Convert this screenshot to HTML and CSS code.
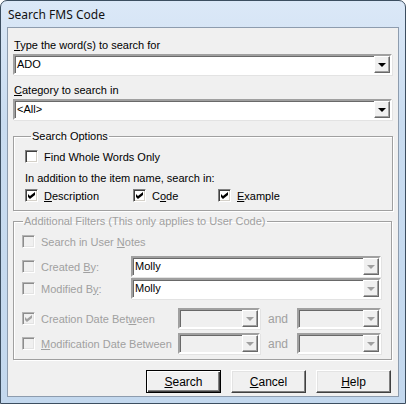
FILE: index.html
```html
<!DOCTYPE html>
<html lang="en">
<head>
  <meta charset="UTF-8">
  <title>Search FMS Code</title>
  <link rel="stylesheet" href="styles.css">
</head>
<body>
  <div class="window">
    <div class="titlebar">Search FMS Code</div>
    <div class="client">
      <div class="label first"><u>T</u>ype the word(s) to search for</div>
      <div class="combo wide">
        <span class="value">ADO</span>
        <span class="drop"><i></i></span>
      </div>
      <div class="label"><u>C</u>ategory to search in</div>
      <div class="combo wide">
        <span class="value">&lt;All&gt;</span>
        <span class="drop"><i></i></span>
      </div>

      <fieldset class="group options">
        <legend>Search Options</legend>
        <label class="check-row whole">
          <span class="check"></span><span>Find Whole Words Only</span>
        </label>
        <div class="note">In addition to the item name, search in:</div>
        <div class="in-row">
          <label class="check-row desc"><span class="check on"></span><span><u>D</u>escription</span></label>
          <label class="check-row code"><span class="check on"></span><span>C<u>o</u>de</span></label>
          <label class="check-row example"><span class="check on"></span><span><u>E</u>xample</span></label>
        </div>
      </fieldset>

      <fieldset class="group filters">
        <legend>Additional Filters (This only applies to User Code)</legend>
        <label class="check-row notes"><span class="check"></span><span>Search in User <u>N</u>otes</span></label>
        <div class="filter-row user">
          <label class="check-row"><span class="check"></span><span>Created <u>B</u>y:</span></label>
          <div class="combo">
            <span class="value">Molly</span>
            <span class="drop"><i></i></span>
          </div>
        </div>
        <div class="filter-row user">
          <label class="check-row"><span class="check"></span><span>Modified B<u>y</u>:</span></label>
          <div class="combo">
            <span class="value">Molly</span>
            <span class="drop"><i></i></span>
          </div>
        </div>
        <div class="filter-row date">
          <label class="check-row"><span class="check on"></span><span>Creation Date Bet<u>w</u>een</span></label>
          <div class="combo grey"><span class="value"></span><span class="drop"><i></i></span></div>
          <span class="and">and</span>
          <div class="combo grey"><span class="value"></span><span class="drop"><i></i></span></div>
        </div>
        <div class="filter-row date">
          <label class="check-row"><span class="check"></span><span><u>M</u>odification Date Between</span></label>
          <div class="combo grey"><span class="value"></span><span class="drop"><i></i></span></div>
          <span class="and">and</span>
          <div class="combo grey"><span class="value"></span><span class="drop"><i></i></span></div>
        </div>
      </fieldset>

      <div class="buttons">
        <button class="default"><u>S</u>earch</button>
        <button><u>C</u>ancel</button>
        <button><u>H</u>elp</button>
      </div>
    </div>
  </div>
</body>
</html>
```

FILE: styles.css
```css
* {
  box-sizing: border-box;
}

body {
  margin: 0;
  font-family: "Liberation Sans", Arial, sans-serif;
  font-size: 11px;
  color: #000;
}

.window {
  width: 406px;
  height: 404px;
  border: 1px solid #3c4e60;
  border-radius: 7px 7px 0 0;
  background: linear-gradient(#dbe8f7, #c9dcf0 30%, #c3d8ee);
  padding: 0 6px 6px 6px;
}

.titlebar {
  height: 26px;
  line-height: 27px;
  padding-left: 1px;
  font-size: 12px;
  font-family: "Noto Sans", "Liberation Sans", sans-serif;
  color: #111;
}

.client {
  height: 370px;
  border: 1px solid #8d9cae;
  background: #f0f0f0;
  padding: 0 5px 0 5px;
}

.label {
  height: 13px;
  line-height: 13px;
  margin-top: 9px;
  padding-left: 1px;
}
.label.first {
  margin-top: 11px;
}

/* combo boxes */
.combo {
  display: flex;
  height: 21px;
  background: #fff;
  border: 2px solid;
  border-color: #a0a0a0 #fff #fff #a0a0a0;
  box-shadow: inset 1px 1px 0 #696969, 1px 1px 0 #e3e3e3;
}
.combo.wide {
  margin: 2px 1px 0 0;
}
.combo .value {
  flex: 1;
  line-height: 16px;
  padding-left: 2px;
  white-space: nowrap;
  overflow: hidden;
}
.combo .drop {
  width: 16px;
  height: 17px;
  background: #f0f0f0;
  border: 1px solid;
  border-color: #fff #696969 #696969 #fff;
  box-shadow: inset -1px -1px 0 #a0a0a0;
  display: flex;
  align-items: center;
  justify-content: center;
}
.combo .drop i {
  width: 0;
  height: 0;
  border-left: 4px solid transparent;
  border-right: 4px solid transparent;
  border-top: 4px solid #000;
  margin-top: 1px;
}
.combo.grey {
  background: #f0f0f0;
}

/* group boxes */
.group {
  margin: 10px 0 0 0;
  border: 1px solid #a0a0a0;
  box-shadow: inset 1px 1px 0 #fff, 1px 1px 0 #fff;
  padding: 0 10px 0 11px;
  min-width: 0;
}
.group legend {
  padding: 0 1px;
  margin-left: 6px;
  line-height: 13px;
}

.check-row {
  display: flex;
  align-items: center;
  white-space: nowrap;
}
.check {
  width: 13px;
  height: 13px;
  flex: none;
  margin-right: 6px;
  background: #fff;
  border: 1px solid;
  border-color: #808080 #fff #fff #808080;
  box-shadow: inset 1px 1px 0 #404040, inset -1px -1px 0 #d4d0c8;
  position: relative;
}
.check.on::after {
  content: "";
  position: absolute;
  left: 2px;
  top: 2px;
  width: 7px;
  height: 7px;
  background: #000;
  clip-path: polygon(0 28%, 28% 57%, 100% 0, 100% 43%, 28% 100%, 0 71%);
}

.options .whole {
  margin-top: 7px;
  height: 13px;
}
.options .note {
  margin-top: 9px;
  height: 13px;
  line-height: 13px;
}
.in-row {
  display: flex;
  margin-top: 4px;
  height: 13px;
  margin-bottom: 8px;
}
.in-row .desc {
  width: 108px;
}
.in-row .code {
  width: 85px;
}

/* disabled filters */
.filters {
  margin-top: 4px;
  margin-right: 1px;
  padding: 0 10px 0 8px;
  color: #a0a0a0;
}
.filters legend {
  margin-left: 1px;
}
.filters .check {
  background: #f0f0f0;
  border-color: #b4b4b4 #fff #fff #b4b4b4;
  box-shadow: inset 1px 1px 0 #8c8c8c, inset -1px -1px 0 #e3e3e3;
}
.filters .check.on::after {
  background: #a0a0a0;
}
.filters .combo .drop i {
  border-top-color: #a0a0a0;
}
.filters .combo .value {
  color: #000;
}
.filters .notes {
  height: 13px;
  margin-top: 7px;
}
.filter-row {
  display: flex;
  align-items: center;
  height: 21px;
  margin-top: 1px;
}
.filters .notes + .filter-row {
  margin-top: 8px;
}
.filter-row.user .check-row {
  width: 109px;
}
.filter-row.user .combo {
  flex: 1;
}
.filter-row.date {
  margin-top: 9px;
}
.filter-row.date + .filter-row.date {
  margin-top: 4px;
  margin-bottom: 5px;
}
.filter-row.date .check-row {
  width: 156px;
}
.filter-row.date .combo {
  width: 82px;
}
.filter-row.date .combo:last-child {
  width: 84px;
}
.filter-row .and {
  width: 37px;
  padding-left: 8px;
  color: #a0a0a0;
  font-size: 12px;
}

/* buttons */
.buttons {
  display: flex;
  justify-content: flex-end;
  gap: 10px;
  margin-top: 10px;
  padding-right: 2px;
}
.buttons button {
  width: 75px;
  height: 23px;
  font: inherit;
  font-size: 12px;
  color: #000;
  background: #f0f0f0;
  border: 1px solid;
  border-color: #fff #404040 #404040 #fff;
  box-shadow: inset -1px -1px 0 #808080, inset 1px 1px 0 #e3e3e3;
  padding: 0;
}
.buttons button.default {
  border: 1px solid #000;
  box-shadow: inset 1px 1px 0 #fff, inset -1px -1px 0 #404040, inset -2px -2px 0 #808080;
}
```
